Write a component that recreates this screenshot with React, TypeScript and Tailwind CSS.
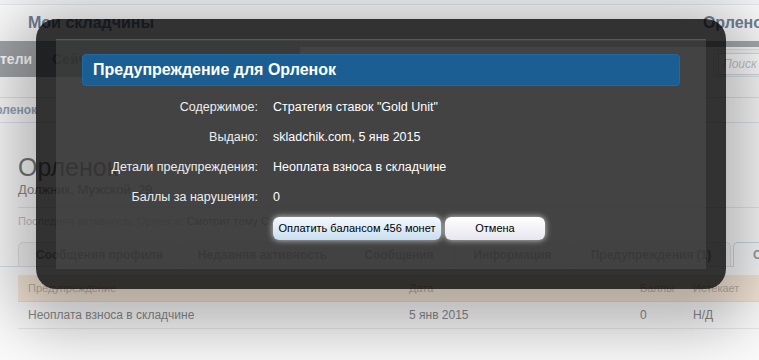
const tabs = [
  { label: "Сообщения профиля", w: "w-[163px]" },
  { label: "Недавняя активность", w: "w-[163px]" },
  { label: "Сообщения", w: "w-[110px]" },
  { label: "Информация", w: "w-[117px]" },
  { label: "Предупреждения (1)", w: "w-[160px]" },
];

const details: Array<[string, string]> = [
  ["Содержимое:", 'Стратегия ставок "Gold Unit"'],
  ["Выдано:", "skladchik.com, 5 янв 2015"],
  ["Детали предупреждения:", "Неоплата взноса в складчине"],
  ["Баллы за нарушения:", "0"],
];

function ProfilePage() {
  return (
    <div className="flex flex-col">
      <div className="h-[5px] bg-[#f3f5f7] border-b border-[#e4e9ee]" />
      <div className="h-[36px] flex items-center justify-between pl-[28px] whitespace-nowrap">
        <span className="text-[16px] font-bold text-[#6f8296]">Мои складчины</span>
        <span className="text-[16px] font-bold text-[#6f8296] mr-[-12px]">Орленок</span>
      </div>
      <div className="h-[36px] flex">
        <div className="w-[300px] bg-[#a2a5a8] flex items-center gap-[20px] text-[14px] font-bold">
          <span className="text-white">тели</span>
          <span className="text-[#6a6c6f]">Сейчас</span>
        </div>
        <div className="flex-1 flex flex-col">
          <div className="h-[19px] bg-[#a7aaad]" />
          <div className="flex-1 flex justify-end">
            <div className="mt-[2px] w-[46px] h-[28px] border border-[#dfe5ea] border-r-0 rounded-l-[4px] bg-[#f4f6f8] pl-[4px] pt-[3px]">
              <div className="h-[22px] border border-[#d5dde4] border-r-0 bg-white pl-[4px] text-[12px] italic leading-[20px] text-[#c2c8cf] overflow-hidden whitespace-nowrap">
                Поиск
              </div>
            </div>
          </div>
        </div>
      </div>
      <div className="mt-[20px] h-[26px] border-y border-[#dde5ec] flex items-center">
        <span className="ml-[-14px] text-[12px] font-bold text-[#8fa4b9]">Орленок</span>
      </div>
      <div className="pl-[18px] pt-[30px]">
        <div className="text-[25px] leading-[28px] text-[#777]">Орленок</div>
        <div className="mt-[1px] text-[13px] leading-[16px] text-[#8c8c8c]">Должник, Мужской, 29</div>
        <div className="mt-[9px] border-t border-[#e6e6e6] pt-[6px] text-[11px] leading-[14px] text-[#c4c4c4] whitespace-nowrap">
          Последняя активность Орленок: <span className="text-[#9a9a9a]">Смотрит тему Стратегия ставок "Gold Unit"</span>
        </div>
        <div className="mt-[15px] flex items-end h-[24px] border-b border-[#d6e1ea] ml-[-18px] pl-[18px]">
          {tabs.map((t) => (
            <div
              key={t.label}
              className={`${t.w} shrink-0 h-[24px] border border-b-0 border-[#dfe4e8] rounded-t-[5px] flex items-center justify-center text-[12px] font-bold text-[#a0a0a0] bg-[#f4f4f4] whitespace-nowrap`}
            >
              {t.label}
            </div>
          ))}
          <div className="shrink-0 ml-[2px] w-[60px] h-[25px] mb-[-1px] border border-b-0 border-[#c9dbe8] rounded-t-[5px] bg-[#f8fbfd] pl-[19px] flex items-center text-[12px] font-bold text-[#9a9a9a] whitespace-nowrap">
            Сообщ
          </div>
        </div>
        <div className="mt-[8px] h-[27px] bg-[#f5e8d8] border-b border-[#eedcc6] flex items-center text-[11px] text-[#c2b3a4]">
          <span className="w-[391px] pl-[10px]">Предупреждение</span>
          <span className="w-[231px]">Дата</span>
          <span className="w-[53px]">Баллы</span>
          <span>Истекает</span>
        </div>
        <div className="h-[27px] border-b border-[#e8e8e8] flex items-center text-[12px] text-[#8a8a8a]">
          <span className="w-[391px] pl-[10px]">Неоплата взноса в складчине</span>
          <span className="w-[231px]">5 янв 2015</span>
          <span className="w-[53px]">0</span>
          <span>Н/Д</span>
        </div>
      </div>
    </div>
  );
}

function WarningModal() {
  return (
    <div className="absolute left-[36px] top-[19px] w-[690px] h-[270px] rounded-[20px] bg-[rgba(0,0,0,0.8)] p-[20px] shadow-[0_15px_60px_25px_rgba(0,0,0,0.28)]">
      <div className="h-full bg-[rgba(88,88,88,0.45)] border-t border-[rgba(110,110,110,0.5)] px-[26px] pt-[14px]">
        <div className="h-[32px] rounded-[4px] bg-[#1a5e93] border border-[#1f6aa3] flex items-center pl-[10px]">
          <h2 className="text-[16px] font-bold text-white">Предупреждение для Орленок</h2>
        </div>
        <div className="mt-[6px] flex flex-col">
          {details.map(([label, value]) => (
            <div key={label} className="h-[30px] flex items-center text-[12.5px] whitespace-nowrap">
              <span className="w-[176px] text-right text-[#eeeeee]">{label}</span>
              <span className="ml-[15px] text-white">{value}</span>
            </div>
          ))}
        </div>
        <div className="mt-[5px] ml-[191px] flex gap-[4px]">
          <button className="w-[168px] h-[23px] rounded-[6px] bg-gradient-to-b from-[#f4f9fd] to-[#c9def0] text-[11px] text-black whitespace-nowrap shadow-[0_0_6px_rgba(255,255,255,0.75)]">
            Оплатить балансом 456 монет
          </button>
          <button className="w-[100px] h-[23px] rounded-[6px] bg-gradient-to-b from-[#ffffff] to-[#e6e6ee] text-[11px] text-black whitespace-nowrap shadow-[0_0_6px_rgba(255,255,255,0.75)]">
            Отмена
          </button>
        </div>
      </div>
    </div>
  );
}

export default function App() {
  return (
    <div className="relative w-[759px] h-[360px] overflow-hidden bg-[#fbfbfc] font-['Liberation_Sans',Arial,sans-serif]">
      <ProfilePage />
      <WarningModal />
    </div>
  );
}
